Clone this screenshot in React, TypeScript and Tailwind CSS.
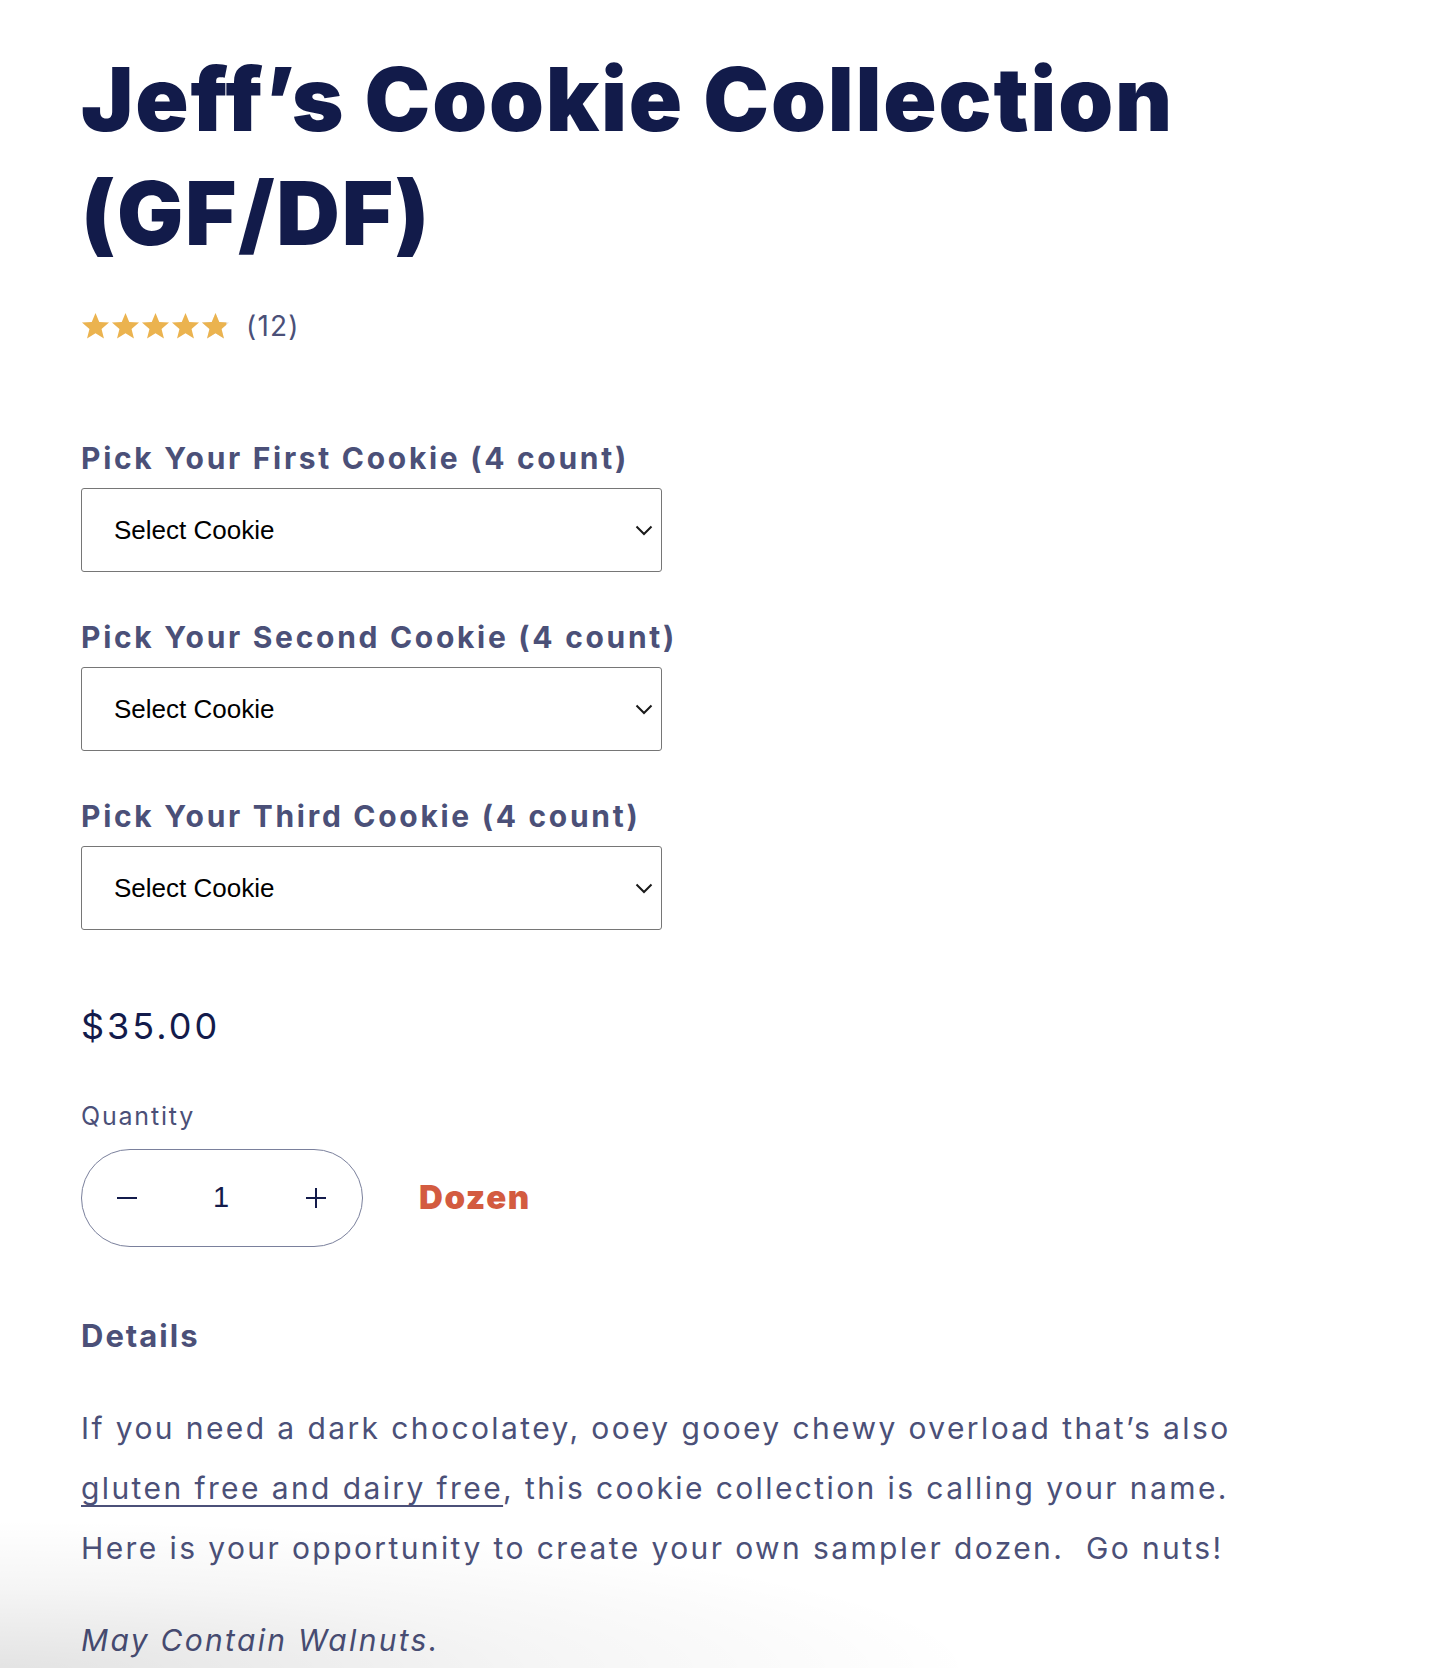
import React from "react";

const Star = ({ partial = false }: { partial?: boolean }) => (
  <svg width="29" height="28" viewBox="0 0 24 23" className="block">
    <polygon
      points="12,0.8 15.1,8.2 23.2,8.7 17,13.9 19,21.8 12,17.5 5,21.8 7,13.9 0.8,8.7 8.9,8.2"
      fill={partial ? "#e5e5e5" : "#ebb34f"}
    />
    {partial && (
      <polygon
        points="12,0.8 15.1,8.2 23.2,8.7 17,13.9 19,21.8 12,17.5 5,21.8 7,13.9 0.8,8.7 8.9,8.2"
        fill="#ebb34f"
        clipPath="url(#clip95)"
      />
    )}
    <defs>
      <clipPath id="clip95">
        <rect x="0" y="0" width="21" height="23" />
      </clipPath>
    </defs>
  </svg>
);

const SelectBox = () => (
  <div className="flex h-[84px] w-[581px] items-center justify-between rounded-[3px] border border-[#767676] bg-white pl-[32px] pr-[8px]">
    <span className="font-['Liberation_Sans',Arial,sans-serif] text-[26px] text-black">Select Cookie</span>
    <svg width="18" height="11" viewBox="0 0 18 11" fill="none">
      <path d="M1.5 1.5 L9 9 L16.5 1.5" stroke="#1a1a1a" strokeWidth="2" />
    </svg>
  </div>
);

const Label = ({ children, className = "" }: { children: React.ReactNode; className?: string }) => (
  <div
    className={`h-[36px] whitespace-nowrap font-['Inter',sans-serif] text-[30px] font-bold leading-[36px] tracking-[2.7px] text-[#4b5078] ${className}`}
  >
    {children}
  </div>
);

export default function App() {
  return (
    <div className="relative min-h-[1668px] w-full overflow-hidden bg-white pl-[81px]">
      <h1 className="whitespace-nowrap pt-[42px] font-['Inter',sans-serif] text-[88px] font-black leading-[114px] tracking-[1.8px] text-[#121b4a]">
        Jeff’s Cookie Collection
        <br />
        (GF/DF)
      </h1>

      <div className="mt-[36px] flex h-[40px] items-center">
        <div className="flex gap-[1px]">
          <Star />
          <Star />
          <Star />
          <Star />
          <Star partial />
        </div>
        <span className="ml-[16px] font-['Inter',sans-serif] text-[28px] tracking-[1.2px] text-[#4b5078]">(12)</span>
      </div>

      <Label className="mt-[94px]">Pick Your First Cookie (4 count)</Label>
      <div className="mt-[12px]">
        <SelectBox />
      </div>

      <Label className="mt-[47px]">Pick Your Second Cookie (4 count)</Label>
      <div className="mt-[12px]">
        <SelectBox />
      </div>

      <Label className="mt-[47px]">Pick Your Third Cookie (4 count)</Label>
      <div className="mt-[12px]">
        <SelectBox />
      </div>

      <div className="mt-[74px] h-[44px] font-['Inter',sans-serif] text-[36px] leading-[44px] tracking-[3px] text-[#131b4b]">
        $35.00
      </div>

      <div className="mt-[52px] h-[32px] font-['Inter',sans-serif] text-[25px] leading-[32px] tracking-[1.8px] text-[#4b5078]">
        Quantity
      </div>

      <div className="mt-[17px] flex items-center">
        <div className="grid h-[98px] w-[282px] grid-cols-[89px_100px_1fr] items-center rounded-full border-[1.5px] border-[#7a809c]">
          <div className="flex justify-center">
            <svg width="20" height="4" viewBox="0 0 20 4">
              <path d="M0 2 H20" stroke="#131b4b" strokeWidth="2" />
            </svg>
          </div>
          <div className="text-center font-['Liberation_Sans',Arial,sans-serif] text-[29px] text-[#131b4b]">1</div>
          <div className="flex justify-center pr-[2px]">
            <svg width="20" height="20" viewBox="0 0 20 20">
              <path d="M0 10 H20 M10 0 V20" stroke="#131b4b" strokeWidth="2" />
            </svg>
          </div>
        </div>
        <span className="ml-[56px] font-['Inter',sans-serif] text-[33px] font-black tracking-[1.6px] text-[#d35b40]">
          Dozen
        </span>
      </div>

      <div className="mt-[69px] h-[40px] font-['Inter',sans-serif] text-[31px] font-bold leading-[40px] tracking-[2px] text-[#4b5078]">
        Details
      </div>

      <p className="mt-[42px] font-['Inter',sans-serif] text-[30px] leading-[60px] tracking-[2.4px] text-[#4b5078]">
        <span className="block whitespace-nowrap">If you need a dark chocolatey, ooey gooey chewy overload that’s also</span>
        <span className="block whitespace-nowrap">
          <span className="underline decoration-[1.5px] underline-offset-[6px]">gluten free and dairy free</span>, this cookie
          collection is calling your name.
        </span>
        <span className="block whitespace-nowrap">Here is your opportunity to create your own sampler dozen.{"\u00a0"} Go nuts!</span>
      </p>

      <p className="mt-[32px] font-['Inter',sans-serif] text-[30px] italic leading-[60px] tracking-[2.3px] text-[#4b5078]">
        May Contain Walnuts.
      </p>

      <div className="pointer-events-none absolute bottom-0 left-0 h-[200px] w-[1400px] bg-[radial-gradient(ellipse_70%_75%_at_0%_100%,rgba(0,0,0,0.11),rgba(0,0,0,0.04)_55%,rgba(0,0,0,0)_100%)]" />
    </div>
  );
}
